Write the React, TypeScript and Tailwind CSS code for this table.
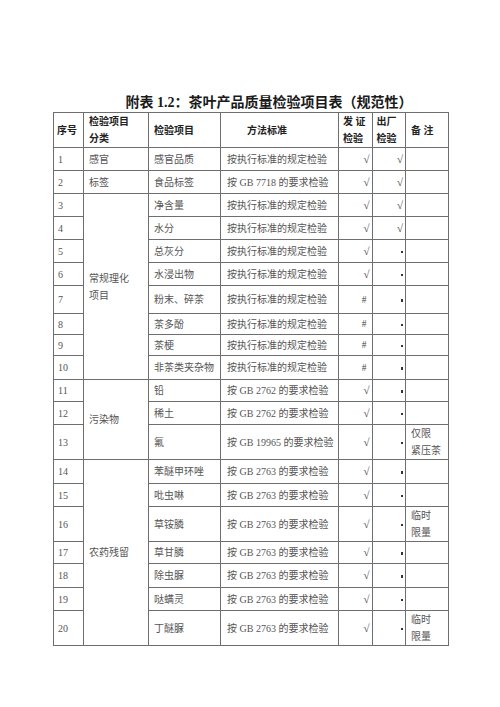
import React from "react";

type Row = {
  no: string;
  cat?: { text: React.ReactNode; span: number };
  item: string;
  method: string;
  a: string;
  b: string;
  note?: React.ReactNode;
  h: number;
};

const STD = "按执行标准的规定检验";
const Dot = () => (
  <span className="inline-block w-[2.5px] h-[2.5px] bg-[#333] align-middle mr-[2px]" />
);

const rows: Row[] = [
  { no: "1", cat: { text: "感官", span: 1 }, item: "感官品质", method: STD, a: "√", b: "√", h: 23 },
  { no: "2", cat: { text: "标签", span: 1 }, item: "食品标签", method: "按 GB 7718 的要求检验", a: "√", b: "√", h: 23 },
  { no: "3", cat: { text: <>常规理化<br />项目</>, span: 8 }, item: "净含量", method: STD, a: "√", b: "√", h: 23 },
  { no: "4", item: "水分", method: STD, a: "√", b: "√", h: 23 },
  { no: "5", item: "总灰分", method: STD, a: "√", b: "*", h: 23 },
  { no: "6", item: "水浸出物", method: STD, a: "√", b: "*", h: 23 },
  { no: "7", item: "粉末、碎茶", method: STD, a: "#", b: "*", h: 28 },
  { no: "8", item: "茶多酚", method: STD, a: "#", b: "*", h: 21 },
  { no: "9", item: "茶梗", method: STD, a: "#", b: "*", h: 21 },
  { no: "10", item: "非茶类夹杂物", method: STD, a: "#", b: "*", h: 24 },
  { no: "11", cat: { text: "污染物", span: 3 }, item: "铅", method: "按 GB 2762 的要求检验", a: "√", b: "*", h: 22 },
  { no: "12", item: "稀土", method: "按 GB 2762 的要求检验", a: "√", b: "*", h: 23 },
  { no: "13", item: "氟", method: "按 GB 19965 的要求检验", a: "√", b: "*", note: <>仅限<br />紧压茶</>, h: 34 },
  { no: "14", cat: { text: "农药残留", span: 7 }, item: "苯醚甲环唑", method: "按 GB 2763 的要求检验", a: "√", b: "*", h: 24 },
  { no: "15", item: "吡虫啉", method: "按 GB 2763 的要求检验", a: "√", b: "*", h: 23 },
  { no: "16", item: "草铵膦", method: "按 GB 2763 的要求检验", a: "√", b: "*", note: <>临时<br />限量</>, h: 34 },
  { no: "17", item: "草甘膦", method: "按 GB 2763 的要求检验", a: "√", b: "*", h: 22 },
  { no: "18", item: "除虫脲", method: "按 GB 2763 的要求检验", a: "√", b: "*", h: 24 },
  { no: "19", item: "哒螨灵", method: "按 GB 2763 的要求检验", a: "√", b: "*", h: 23 },
  { no: "20", item: "丁醚脲", method: "按 GB 2763 的要求检验", a: "√", b: "*", note: <>临时<br />限量</>, h: 34 },
];

const td = "border border-[#6e6e6e] p-0 align-middle";

function Mark({ v }: { v: string }) {
  if (v === "*") return <Dot />;
  if (v === "#") return <span className="mr-[5px] text-[9.5px] text-[#444]">#</span>;
  return <span className="mr-[2px] text-[11px] text-[#444]">{v}</span>;
}

export default function App() {
  return (
    <div
      className="w-[500px] h-[707px] bg-white text-[#555]"
      style={{ fontFamily: '"Liberation Serif", "Noto Sans CJK SC", serif' }}
    >
      <div className="pt-[94px] pl-[38px] flex justify-center">
        <h1
          className="text-[14px] leading-[18px] font-bold text-[#1a1a1a]"
          style={{ fontFamily: '"Liberation Serif", "Noto Sans CJK SC", sans-serif' }}
        >
          附表 1.2：茶叶产品质量检验项目表（规范性）
        </h1>
      </div>
      <table className="ml-[53px] border-collapse table-fixed text-[10px] leading-[17px] w-[395px]">
        <colgroup>
          <col className="w-[30px]" />
          <col className="w-[65px]" />
          <col className="w-[72px]" />
          <col className="w-[118px]" />
          <col className="w-[33.5px]" />
          <col className="w-[33.5px]" />
          <col className="w-[43px]" />
        </colgroup>
        <thead>
          <tr className="h-[33px] font-bold text-[#222]">
            <td className={`${td} pl-[3px]`}>序号</td>
            <td className={`${td} pl-[5px]`}>
              检验项目
              <br />
              分类
            </td>
            <td className={`${td} pl-[5px]`}>检验项目</td>
            <td className={`${td} pl-[26px]`}>方法标准</td>
            <td className={`${td} pl-[4px]`}>
              发 证
              <br />
              检验
            </td>
            <td className={`${td} pl-[4px]`}>
              出厂
              <br />
              检验
            </td>
            <td className={`${td} pl-[5px]`}>备 注</td>
          </tr>
        </thead>
        <tbody>
          {rows.map((r) => (
            <tr key={r.no} style={{ height: r.h }}>
              <td className={`${td} pl-[4px]`}>{r.no}</td>
              {r.cat && (
                <td className={`${td} pl-[5px]`} rowSpan={r.cat.span}>
                  {r.cat.text}
                </td>
              )}
              <td className={`${td} pl-[5px]`}>{r.item}</td>
              <td className={`${td} pl-[6px] whitespace-nowrap`}>{r.method}</td>
              <td className={`${td} text-right`}>
                <Mark v={r.a} />
              </td>
              <td className={`${td} text-right`}>
                <Mark v={r.b} />
              </td>
              <td className={`${td} pl-[5px]`}>{r.note}</td>
            </tr>
          ))}
        </tbody>
      </table>
    </div>
  );
}
